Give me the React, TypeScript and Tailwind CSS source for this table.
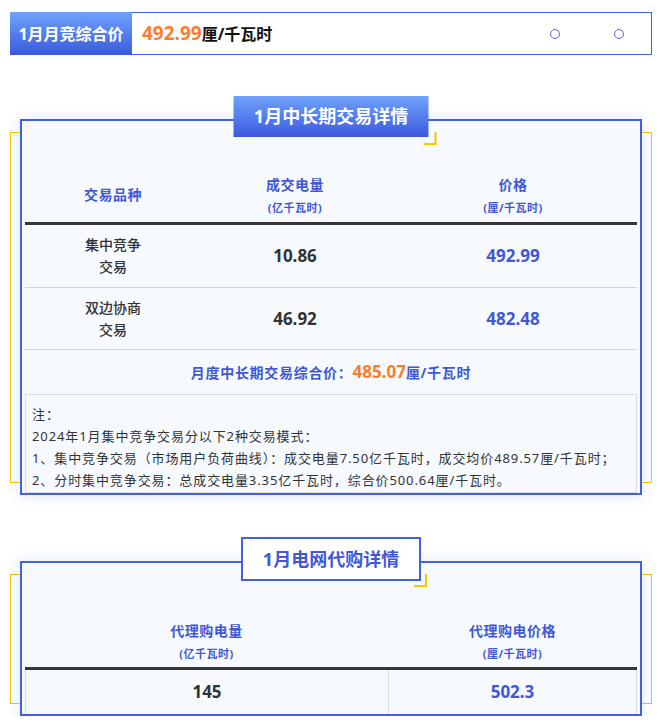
import React from "react";

const BLUE = "text-[#3f58d8]";

const Section = ({ title, solid, children }: { title: string; solid?: boolean; children: React.ReactNode }) => {
  return (
    <div className="relative px-[10px]">
      <div className="absolute inset-x-0 top-[13px] bottom-[12px] border border-[#f6c600]" />
      <div className="relative border-2 border-[#4260e2] bg-[#f6f9fe] shadow-[0_0_14px_rgba(70,110,230,0.18)]">
        <div
          className={
            solid
              ? "absolute left-1/2 -translate-x-1/2 top-[-25px] h-[41px] w-[195px] flex items-center justify-center bg-gradient-to-b from-[#70a2fb] to-[#3c58de] text-white text-[18px] font-bold"
              : "absolute left-1/2 -translate-x-1/2 top-[-26px] h-[44px] w-[180px] flex items-center justify-center bg-white border-2 border-[#4260e2] text-[#4058d8] text-[18px] font-bold"
          }
        >
          {title}
          <span className="absolute right-[-8px] bottom-[-8px] w-[13px] h-[13px] border-r-2 border-b-2 border-[#f6c600]" />
        </div>
        {children}
      </div>
    </div>
  );
};

const HeadCell = ({ main, sub }: { main: string; sub?: string }) => (
  <div className={`flex flex-col items-center justify-center font-bold ${BLUE}`}>
    <div className="text-[14px] leading-[20px] tracking-[0.5px]">{main}</div>
    {sub && <div className="text-[11px] leading-[16px] mt-[5px] tracking-[0.5px]">{sub}</div>}
  </div>
);

export default function App() {
  return (
    <div className="w-[662px] px-[10px] pt-[12px] bg-white font-['Noto_Sans','Noto_Sans_CJK_SC',sans-serif]">
      {/* top bar */}
      <div className="flex h-[43px] border border-[#4260e2] bg-white">
        <div className="w-[122px] -my-px -ml-px flex items-center justify-center bg-gradient-to-b from-[#70a2fb] to-[#3c58de] text-white text-[16px] font-bold">
          1月月竞综合价
        </div>
        <div className="flex items-center pl-[10px]">
          <span className="text-[19px] font-bold text-[#fb7d2b]">492.99</span>
          <span className="text-[16px] font-bold text-[#111]">厘/千瓦时</span>
        </div>
        <div className="ml-auto flex items-center gap-[54px] pr-[27px]">
          <span className="w-[10px] h-[10px] rounded-full border-[1.5px] border-[#4a63e0]" />
          <span className="w-[10px] h-[10px] rounded-full border-[1.5px] border-[#4a63e0]" />
        </div>
      </div>

      <div className="mt-[64px]">
        <Section title="1月中长期交易详情" solid>
          <div className="pt-[45px] px-[3px]">
            <div className="grid grid-cols-[176px_188px_1fr] h-[56px] pt-[2px]">
              <HeadCell main="交易品种" />
              <HeadCell main="成交电量" sub="(亿千瓦时)" />
              <HeadCell main="价格" sub="(厘/千瓦时)" />
            </div>
            <div className="h-[3px] bg-[#353535]" />
            {[
              ["集中竞争", "10.86", "492.99", "h-[63px]"],
              ["双边协商", "46.92", "482.48", "h-[62px]"],
            ].map(([name, qty, price, h]) => (
              <div key={name} className={`grid grid-cols-[176px_188px_1fr] ${h} border-b border-[#cfd3da]`}>
                <div className="flex flex-col items-center justify-center text-[14px] leading-[22px] font-medium text-[#333]">
                  <span>{name}</span>
                  <span>交易</span>
                </div>
                <div className="flex items-center justify-center text-[17px] font-bold text-[#333]">{qty}</div>
                <div className={`flex items-center justify-center text-[17px] font-bold ${BLUE}`}>{price}</div>
              </div>
            ))}
            <div className={`h-[44px] flex items-center justify-center text-[14px] font-bold tracking-[0.7px] ${BLUE}`}>
              月度中长期交易综合价：
              <span className="text-[17px] text-[#fb7d2b] tracking-normal">485.07</span>
              厘/千瓦时
            </div>
            <div className="border border-[#d9dce2] pt-[8px] pb-[1px] pl-[6px] text-[13px] leading-[22px] tracking-[0.9px] text-[#333]">
              <div>注：</div>
              <div>2024年1月集中竞争交易分以下2种交易模式：</div>
              <div>1、集中竞争交易（市场用户负荷曲线）：成交电量7.50亿千瓦时，成交均价489.57厘/千瓦时；</div>
              <div>2、分时集中竞争交易：总成交电量3.35亿千瓦时，综合价500.64厘/千瓦时。</div>
            </div>
          </div>
        </Section>
      </div>

      <div className="mt-[66px]">
        <Section title="1月电网代购详情">
          <div className="pt-[52px] px-[3px]">
            <div className="grid grid-cols-[363px_1fr] h-[52px]">
              <HeadCell main="代理购电量" sub="(亿千瓦时)" />
              <HeadCell main="代理购电价格" sub="(厘/千瓦时)" />
            </div>
            <div className="h-[3px] bg-[#353535]" />
            <div className="grid grid-cols-[363px_1fr] h-[44px] border-x border-[#d9dce2]">
              <div className="flex items-center justify-center border-r border-[#d9dce2] text-[17px] font-bold text-[#333]">145</div>
              <div className={`flex items-center justify-center text-[17px] font-bold ${BLUE}`}>502.3</div>
            </div>
          </div>
        </Section>
      </div>
    </div>
  );
}
